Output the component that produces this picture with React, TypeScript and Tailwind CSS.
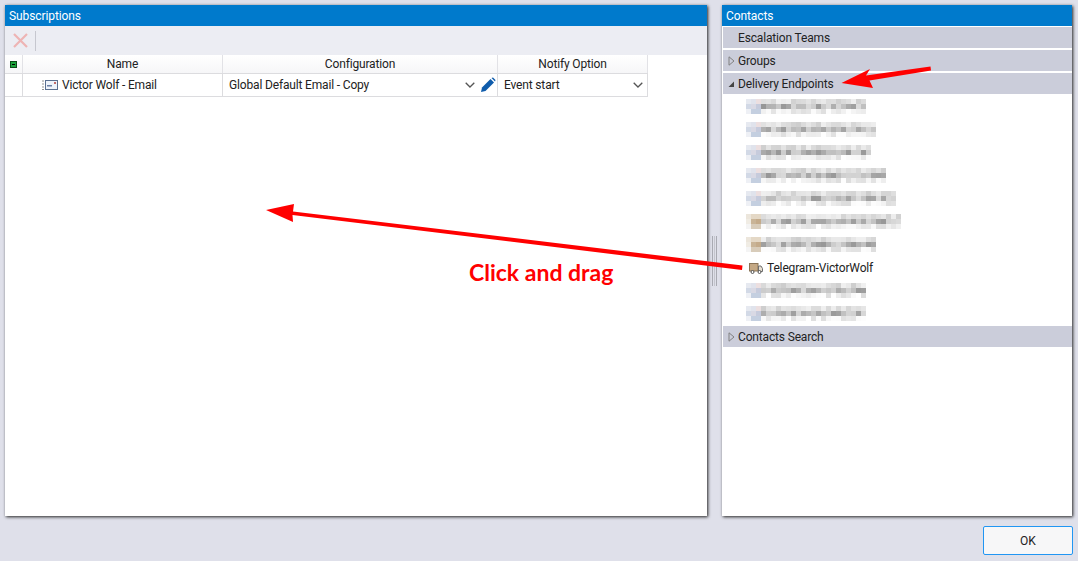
import React from "react";

const font = { fontFamily: 'Roboto,"Noto Sans",sans-serif' };

function Chevron() {
  return (
    <svg width="10" height="6" viewBox="0 0 10 6" className="shrink-0">
      <path d="M0.7 0.7 L5 5 L9.3 0.7" fill="none" stroke="#555" strokeWidth="1.3" />
    </svg>
  );
}

function Expander({ open }: { open?: boolean }) {
  return open ? (
    <svg width="8" height="8" viewBox="0 0 8 8" className="shrink-0">
      <path d="M7 1.5 V7 H1.5 Z" fill="#444" />
    </svg>
  ) : (
    <svg width="7" height="10" viewBox="0 0 7 10" className="shrink-0">
      <path d="M1 0.8 L6 5 L1 9.2 Z" fill="none" stroke="#808080" />
    </svg>
  );
}

function AccHeader({ label, state }: { label: string; state?: "open" | "closed" }) {
  return (
    <div className="h-[21px] bg-[#cbcdda] flex items-center text-[12px] tracking-[-0.16px] text-[#222]">
      <span className="w-[15px] flex justify-center pl-[1px]">
        {state && <Expander open={state === "open"} />}
      </span>
      <span>{label}</span>
    </div>
  );
}

function MailIcon() {
  return (
    <svg width="16" height="12" viewBox="0 0 16 12" className="shrink-0">
      <path d="M0 2h2M0 5h2M0 8h2M0 10.5h2" stroke="#777" strokeWidth="0.8" />
      <rect x="3.5" y="1.5" width="12" height="9" fill="#eef3fa" stroke="#5a6f90" />
      <rect x="5" y="6" width="5" height="1.5" fill="#6a7fa5" />
      <rect x="12" y="3" width="2" height="2" fill="#c26a6a" />
    </svg>
  );
}

function TruckIcon() {
  return (
    <svg width="14" height="12" viewBox="0 0 14 12" className="shrink-0">
      <rect x="0.5" y="1.5" width="8.5" height="7.5" fill="#c4a884" stroke="#8a7457" />
      <path d="M9.5 4 H12 L13.5 6.5 V9.5 H9.5 Z" fill="#e7dfd2" stroke="#6f6f6f" />
      <circle cx="3.5" cy="10" r="1.5" fill="#fff" stroke="#555" />
      <circle cx="10.5" cy="10" r="1.5" fill="#fff" stroke="#555" />
    </svg>
  );
}

// Pixelated (redacted) names, drawn as a mosaic.
function Mosaic({ width, truck, seed }: { width: number; truck?: boolean; seed: number }) {
  const cols = Math.floor(width / 5);
  const cells: React.ReactNode[] = [];
  const rnd = (i: number) => {
    const v = Math.sin(i * 12.9898 + seed * 78.233) * 43758.5453;
    return v - Math.floor(v);
  };
  const iconColors = truck
    ? [["#ece6dc", "#e4d8c6", "#e4d8c6"], ["#f0ece4", "#c9b497", "#c4ab8b"], ["#f4f4f4", "#d8ccba", "#d8ccba"]]
    : [["#e6e9f0", "#e0e3ec", "#ecdfe0"], ["#d2d9e6", "#d9d9e4", "#c6cbdc"], ["#eef0f5", "#c4cfe0", "#c4cfe0"]];
  for (let c = 0; c < cols; c++) {
    for (let r = 0; r < 3; r++) {
      let fill: string;
      if (c < 3) {
        fill = iconColors[r][c];
      } else {
        const base = r === 1 ? 150 : r === 0 ? 205 : 220;
        const g = Math.round(base + rnd(c * 3 + r) * (r === 1 ? 70 : 35));
        fill = `rgb(${g},${g},${g})`;
      }
      cells.push(<rect key={`${c}-${r}`} x={c * 5} y={r * 5} width="5" height="5" fill={fill} />);
    }
  }
  return (
    <div className="h-[23px] flex items-center pl-[23px]">
      <svg width={width} height="15" viewBox={`0 0 ${width} 15`} shapeRendering="crispEdges">
        {cells}
      </svg>
    </div>
  );
}

const rows = [120, 130, 125, 140, 150, 155, 130, 0, 120, 120];

export default function App() {
  return (
    <div className="relative h-[561px] w-[1078px] overflow-hidden bg-[#dfe0ea] flex flex-col" style={font}>
      <div className="flex flex-1 min-h-0 pt-[5px] pl-[5px] pr-[6px]">
        {/* Subscriptions */}
        <div className="w-[702px] h-[511px] bg-white flex flex-col shadow-[1px_1px_3px_#222]">
          <div className="h-[21px] bg-[#007acc] text-white text-[12px] tracking-[-0.1px] flex items-center pl-[4px]">Subscriptions</div>
          <div className="h-[29px] bg-[#ecedf3] flex items-center pl-[8px] gap-[7px]">
            <svg width="15" height="15" viewBox="0 0 15 15">
              <path d="M1 1 L14 14 M14 1 L1 14" stroke="#eeb4b4" strokeWidth="2.2" />
            </svg>
            <div className="w-px h-[20px] bg-[#c6c7cf]" />
          </div>
          <div className="h-[19px] flex text-[12px] tracking-[-0.16px] text-[#222] w-[643px] border-b border-[#dcdcdf] bg-gradient-to-b from-white to-[#f6f6f8]">
            <div className="w-[18px] flex items-center justify-center border-r border-[#e2e2e6]">
              <span className="w-[7px] h-[7px] bg-[#1aa33a] border border-[#0b4a18] flex items-center justify-center">
                <span className="w-[3px] h-[1px] bg-black" />
              </span>
            </div>
            <div className="w-[200px] border-r border-[#e2e2e6] flex items-center justify-center">Name</div>
            <div className="w-[275px] border-r border-[#e2e2e6] flex items-center justify-center">Configuration</div>
            <div className="w-[150px] border-r border-[#e2e2e6] flex items-center justify-center">Notify Option</div>
          </div>
          <div className="h-[23px] flex text-[12px] tracking-[-0.16px] text-[#222] w-[643px] border-b border-[#dcdcdf]">
            <div className="w-[18px] border-r border-[#dcdcdf]" />
            <div className="w-[200px] border-r border-[#dcdcdf] flex items-center pl-[19px] gap-[4px]">
              <MailIcon />
              <span>Victor Wolf - Email</span>
            </div>
            <div className="w-[275px] border-r border-[#dcdcdf] flex items-center pl-[6px]">
              <span className="flex-1">Global Default Email - Copy</span>
              <Chevron />
              <svg width="16" height="16" viewBox="0 0 16 16" className="ml-[5px] mr-[1px] shrink-0">
                <path d="M1 15 L2 10.5 L10.5 2 L14 5.5 L5.5 14 Z" fill="#0f5cab" />
                <path d="M11.5 1 L13 0.5 L15.5 3 L15 4.5 Z" fill="#0f5cab" />
              </svg>
            </div>
            <div className="w-[150px] border-r border-[#dcdcdf] flex items-center pl-[6px] pr-[4px]">
              <span className="flex-1">Event start</span>
              <Chevron />
            </div>
          </div>
        </div>

        {/* Splitter */}
        <div className="w-[15px] h-[511px] flex items-center justify-center">
          <div className="w-[5px] h-[50px] border-x border-[#a9aab2] flex justify-center">
            <div className="w-px h-full bg-[#c4c5cd]" />
          </div>
        </div>

        {/* Contacts */}
        <div className="w-[350px] h-[511px] bg-white flex flex-col shadow-[1px_1px_3px_#222]">
          <div className="h-[21px] bg-[#007acc] text-white text-[12px] tracking-[-0.1px] flex items-center pl-[4px]">Contacts</div>
          <div className="flex flex-col gap-[2px] pt-[1px] pl-[1px]">
            <AccHeader label="Escalation Teams" />
            <AccHeader label="Groups" state="closed" />
            <AccHeader label="Delivery Endpoints" state="open" />
          </div>
          <div className="pl-[1px] pt-[1px] flex flex-col">
            {rows.map((w, i) =>
              w === 0 ? (
                <div key={i} className="h-[23px] flex items-center pl-[26px] gap-[4px] text-[12px] tracking-[-0.16px] text-[#222]">
                  <TruckIcon />
                  <span>Telegram-VictorWolf</span>
                </div>
              ) : (
                <Mosaic key={i} width={w} seed={i + 1} truck={i === 5 || i === 6} />
              )
            )}
          </div>
          <div className="pl-[1px] pt-[1px]">
            <AccHeader label="Contacts Search" state="closed" />
          </div>
        </div>
      </div>

      {/* Footer */}
      <div className="h-[45px] flex justify-end items-start pt-[10px] pr-[5px]">
        <button className="w-[90px] h-[29px] rounded-[2px] border border-[#2196f3] bg-[#f7f7f8] text-[12px] text-[#222]">OK</button>
      </div>

      {/* Annotations over the screenshot */}
      <svg className="absolute inset-0 pointer-events-none" width="1078" height="561" viewBox="0 0 1078 561">
        <path d="M930.5 66.5 L866 75.5 L870 69 L841.5 83 L873 88 L869.5 80.5 L931 70.5 Z" fill="#ff0000" />
        <path d="M294 204 L266 210 L293 222 L292.5 215 L742 270 L742.5 265.5 L293 211.5 Z" fill="#ff0000" />
      </svg>
      <span className="absolute left-[469px] top-[258px] text-[23px] leading-[28px] font-bold text-[#ff0000]" style={{ fontFamily: 'Lato,sans-serif' }}>
        Click and drag
      </span>
    </div>
  );
}
